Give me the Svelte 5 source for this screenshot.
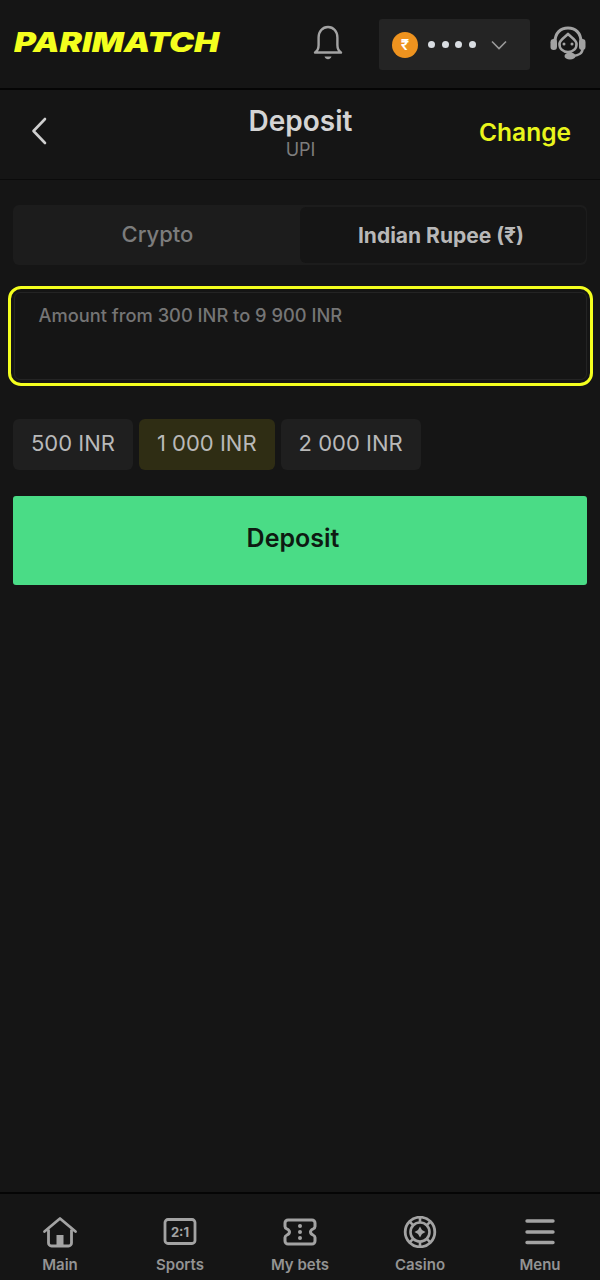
<script lang="ts">
	const chips = [
		{ label: '500 INR', active: false },
		{ label: '1 000 INR', active: true },
		{ label: '2 000 INR', active: false }
	];
	const navItems = ['Main', 'Sports', 'My bets', 'Casino', 'Menu'];
</script>

<div class="page">
	<header class="topbar">
		<div class="logo"><span>PARIMATCH</span></div>
		<svg class="bell" viewBox="0 0 30 36" width="30" height="36" fill="none" stroke="#a3a3a3" stroke-width="2.400">
			<path d="M2 27.500c2.600-1.600 3.600-4 3.600-7.500V12.500C5.600 6.500 9.500 2 15 2s9.400 4.500 9.400 10.500V20c0 3.500 1 5.900 3.600 7.500z" stroke-linejoin="round" />
			<path d="M11.500 31.500h7c-.6 1.800-1.900 2.800-3.500 2.800s-2.900-1-3.500-2.800z" fill="#a3a3a3" stroke="none" />
		</svg>
		<div class="balance">
			<span class="coin">₹</span>
			<span class="dots"><i></i><i></i><i></i><i></i></span>
			<svg viewBox="0 0 16 10" width="16" height="10" fill="none" stroke="#9a9a9a" stroke-width="1.600">
				<path d="M1 1.500l7 7 7-7" />
			</svg>
		</div>
		<svg class="support" viewBox="0 0 36 34" width="36" height="34" fill="none" stroke="#a3a3a3">
			<path d="M5 16C5 7 10.500 2 18 2s13 5 13 14" stroke-width="3" />
			<path d="M9.500 17.500C10 13.500 14.500 11.500 18 8c3.500 3.500 8 5.500 8.500 9.500.5 5-3.500 8.500-8.500 8.500s-9-3.500-8.500-8.500z" stroke-width="2.600" stroke-linejoin="round" />
			<rect x="0.500" y="13" width="6.500" height="11" rx="3.200" fill="#a3a3a3" stroke="none" />
			<rect x="29" y="13" width="6.500" height="11" rx="3.200" fill="#a3a3a3" stroke="none" />
			<circle cx="14" cy="18" r="1.500" fill="#a3a3a3" stroke="none" />
			<circle cx="22" cy="18" r="1.500" fill="#a3a3a3" stroke="none" />
			<path d="M32.500 23c0 4-4 6.500-9 7" stroke-width="2.600" />
			<ellipse cx="20" cy="30" rx="5.500" ry="3.600" fill="#a3a3a3" stroke="none" />
		</svg>
	</header>

	<div class="subbar">
		<svg class="back" viewBox="0 0 16 28" width="16" height="28" fill="none" stroke="#cfcfcf" stroke-width="2.600" stroke-linecap="round" stroke-linejoin="round">
			<path d="M14 2L2.500 14 14 26" />
		</svg>
		<div class="heading">
			<div class="title">Deposit</div>
			<div class="method">UPI</div>
		</div>
		<span class="change">Change</span>
	</div>

	<main class="content">
		<div class="tabs">
			<div class="tab">Crypto</div>
			<div class="tab selected">Indian Rupee (₹)</div>
		</div>

		<div class="field-ring">
			<div class="field">Amount from 300 INR to 9 900 INR</div>
		</div>

		<div class="chips">
			{#each chips as chip}
				<div class="chip" class:active={chip.active}>{chip.label}</div>
			{/each}
		</div>

		<button class="submit">Deposit</button>
	</main>

	<nav class="bottom">
		{#each navItems as item}
			<div class="nav-item">
				{#if item === 'Main'}
					<svg viewBox="0 0 36 32" width="36" height="32" fill="none" stroke="#a3a3a3" stroke-width="2.800" stroke-linejoin="round">
						<path d="M2.500 15.500L18 2.500l15.500 13" stroke-linecap="round" />
						<path d="M6.500 13.500v13.500a3 3 0 0 0 3 3h17a3 3 0 0 0 3-3V13.500" />
						<rect x="14.500" y="19" width="7" height="11" fill="#a3a3a3" stroke="none" />
					</svg>
				{:else if item === 'Sports'}
					<svg viewBox="0 0 36 32" width="36" height="32" fill="none">
						<rect x="3" y="3.500" width="30" height="24" rx="3" stroke="#a3a3a3" stroke-width="2.800" />
						<text x="18" y="20.500" text-anchor="middle" class="score">2:1</text>
					</svg>
				{:else if item === 'My bets'}
					<svg viewBox="0 0 36 32" width="36" height="32" fill="none" stroke="#a3a3a3" stroke-width="3" stroke-linejoin="round">
						<path d="M6 4h24a3 3 0 0 1 3 3v3.500c0 1.500-1 2-2 2.500-1.500.7-2.500 1.600-2.500 3s1 2.300 2.500 3c1 .5 2 1 2 2.500V25a3 3 0 0 1-3 3H6a3 3 0 0 1-3-3v-3.500c0-1.500 1-2 2-2.500 1.500-.7 2.500-1.600 2.500-3s-1-2.300-2.500-3c-1-.5-2-1-2-2.500V7a3 3 0 0 1 3-3z" />
						<circle cx="18" cy="10" r="2" fill="#a3a3a3" stroke="none" />
						<circle cx="18" cy="16" r="2" fill="#a3a3a3" stroke="none" />
						<circle cx="18" cy="22" r="2" fill="#a3a3a3" stroke="none" />
					</svg>
				{:else if item === 'Casino'}
					<svg viewBox="0 0 36 32" width="36" height="32" fill="none" stroke="#a3a3a3" stroke-width="2.600">
						<circle cx="18" cy="16" r="14.800" stroke-width="2.800" />
						<circle cx="18" cy="16" r="9.500" />
						<path d="M18 1v6M18 25v6M7.400 5.400l4 4M24.600 22.600l4 4M28.600 5.400l-4 4M11.400 22.600l-4 4" />
						<path d="M18 10.500l2 3.500 3.500 2-3.500 2-2 3.500-2-3.500-3.500-2 3.500-2z" fill="#a3a3a3" stroke="none" />
					</svg>
				{:else}
					<svg viewBox="0 0 36 32" width="36" height="32" fill="none" stroke="#a3a3a3" stroke-width="3.400" stroke-linecap="round">
						<path d="M5 5h26M5 16h26M5 26.500h26" />
					</svg>
				{/if}
				<span class="nav-label">{item}</span>
			</div>
		{/each}
	</nav>
</div>

<style>
	:global(body) {
		margin: 0;
		background: #151515;
	}

	.page {
		display: flex;
		flex-direction: column;
		height: 1280px;
		background: #151515;
		font-family: Inter, 'Noto Sans', sans-serif;
		color: #bdbdbd;
	}

	.topbar {
		display: flex;
		align-items: center;
		height: 90px;
		padding: 0 14px;
		box-sizing: border-box;
		border-bottom: 2px solid #050505;
	}

	.logo {
		flex: none;
		width: 206px;
		color: #f4ff1e;
		font-size: 27px;
		line-height: 1;
		font-weight: 900;
		font-style: italic;
		margin-top: -4px;
	}

	.logo span {
		display: inline-block;
		transform: scaleX(1.24);
		transform-origin: left center;
		white-space: nowrap;
	}

	.bell {
		flex: none;
		margin: -2px 0 0 93px;
	}

	.balance {
		flex: none;
		display: flex;
		align-items: center;
		width: 151px;
		height: 51px;
		margin: 1px 0 0 36px;
		padding-left: 13px;
		box-sizing: border-box;
		background: #242424;
		border-radius: 3px;
	}

	.coin {
		display: flex;
		align-items: center;
		justify-content: center;
		width: 26px;
		height: 26px;
		border-radius: 50%;
		background: #ee931f;
		color: #fff;
		font-size: 15px;
		font-weight: 600;
	}

	.dots {
		display: flex;
		gap: 6.500px;
		margin: 0 15px 0 10px;
	}

	.dots i {
		width: 7px;
		height: 7px;
		border-radius: 50%;
		background: #d9dde2;
	}

	.support {
		flex: none;
		margin: -2px 0 0 20px;
	}

	.subbar {
		display: grid;
		grid-template-columns: 1fr auto 1fr;
		align-items: center;
		height: 90px;
		padding: 0 29px 0 31px;
		box-sizing: border-box;
		border-bottom: 1px solid #0b0b0b;
	}

	.back {
		margin-top: -8px;
	}

	.heading {
		text-align: center;
		margin: -4px 1px 0 0;
	}

	.title {
		font-size: 28px;
		line-height: 32px;
		font-weight: 600;
		color: #d4d4d4;
	}

	.method {
		margin-top: 2px;
		font-size: 18px;
		line-height: 22px;
		color: #7d7d7d;
	}

	.change {
		justify-self: end;
		font-size: 24.500px;
		font-weight: 600;
		color: #e9f51c;
		margin-top: -6px;
	}

	.content {
		flex: 1;
		padding: 25px 13px 0;
	}

	.tabs {
		display: flex;
		height: 60px;
		box-sizing: border-box;
		background: #1c1c1c;
		border-radius: 6px;
	}

	.tab {
		flex: 1;
		display: flex;
		align-items: center;
		justify-content: center;
		padding: 0 0 2px 2px;
		box-sizing: border-box;
		font-size: 22px;
		font-weight: 500;
		color: #7c7c7c;
	}

	.tab.selected {
		flex: 0 0 286px;
		margin: 2px 1px 2px 0;
		padding: 0 4px 0 0;
		background: #151515;
		border-radius: 6px;
		font-size: 21px;
		font-weight: 700;
		color: #b8b8b8;
	}

	.field-ring {
		margin: 21px -5.500px 0;
		height: 100px;
		box-sizing: border-box;
		border: 3px solid #f4ff1e;
		border-radius: 13px;
		padding: 3px;
	}

	.field {
		height: 100%;
		box-sizing: border-box;
		border: 1px solid #242424;
		border-radius: 6px;
		padding: 10px 24px;
		font-size: 18.300px;
		line-height: 24px;
		font-weight: 500;
		color: #757575;
	}

	.chips {
		display: flex;
		gap: 6px;
		margin-top: 33px;
	}

	.chip {
		display: flex;
		align-items: center;
		justify-content: center;
		height: 51px;
		padding: 0 18px 3px;
		box-sizing: border-box;
		background: #1f1f1f;
		border-radius: 6px;
		font-size: 22px;
		color: #b9b9b9;
	}

	.chip.active {
		background: #2f2d14;
	}

	.submit {
		display: block;
		width: 100%;
		height: 89px;
		margin-top: 26px;
		padding: 0 14px 5px 0;
		border: 0;
		border-radius: 3px;
		background: #4adc86;
		color: #0e1a12;
		font-family: inherit;
		font-size: 25px;
		font-weight: 600;
	}

	.bottom {
		display: flex;
		height: 88px;
		box-sizing: border-box;
		border-top: 2px solid #050505;
		padding-top: 22px;
	}

	.nav-item {
		flex: 1;
		display: flex;
		flex-direction: column;
		align-items: center;
		gap: 7px;
	}

	.nav-label {
		font-size: 15px;
		line-height: 20px;
		font-weight: 600;
		color: #939393;
	}

	.score {
		font-size: 13px;
		font-weight: 700;
		fill: #a3a3a3;
		font-family: Inter, sans-serif;
	}
</style>
